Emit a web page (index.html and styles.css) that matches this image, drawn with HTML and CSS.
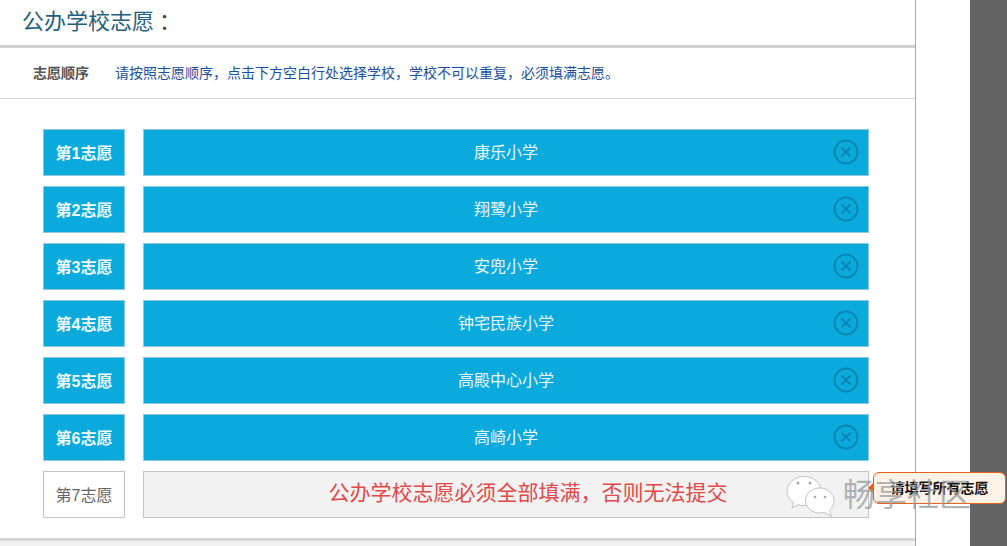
FILE: index.html
```html
<!DOCTYPE html>
<html lang="zh-CN">
<head>
    <meta charset="UTF-8">
    <title>公办学校志愿</title>
    <link rel="stylesheet" href="styles.css">
</head>
<body>
    <div class="page">
        <div class="panel">
            <h2 class="title">公办学校志愿<span class="colon">：</span></h2>
            <div class="intro">
                <strong>志愿顺序</strong>
                <span>请按照志愿顺序，点击下方空白行处选择学校，学校不可以重复，必须填满志愿。</span>
            </div>
            <div class="list">
                <div class="row">
                    <div class="label filled">第1志愿</div>
                    <div class="bar filled">康乐小学
                        <svg class="remove" viewBox="0 0 26 26"><circle cx="13" cy="13" r="11.5"/><path d="M8.500 8.500l9 9M17.500 8.500l-9 9"/></svg>
                    </div>
                </div>
                <div class="row">
                    <div class="label filled">第2志愿</div>
                    <div class="bar filled">翔鹭小学
                        <svg class="remove" viewBox="0 0 26 26"><circle cx="13" cy="13" r="11.5"/><path d="M8.500 8.500l9 9M17.500 8.500l-9 9"/></svg>
                    </div>
                </div>
                <div class="row">
                    <div class="label filled">第3志愿</div>
                    <div class="bar filled">安兜小学
                        <svg class="remove" viewBox="0 0 26 26"><circle cx="13" cy="13" r="11.5"/><path d="M8.500 8.500l9 9M17.500 8.500l-9 9"/></svg>
                    </div>
                </div>
                <div class="row">
                    <div class="label filled">第4志愿</div>
                    <div class="bar filled">钟宅民族小学
                        <svg class="remove" viewBox="0 0 26 26"><circle cx="13" cy="13" r="11.5"/><path d="M8.500 8.500l9 9M17.500 8.500l-9 9"/></svg>
                    </div>
                </div>
                <div class="row">
                    <div class="label filled">第5志愿</div>
                    <div class="bar filled">高殿中心小学
                        <svg class="remove" viewBox="0 0 26 26"><circle cx="13" cy="13" r="11.5"/><path d="M8.500 8.500l9 9M17.500 8.500l-9 9"/></svg>
                    </div>
                </div>
                <div class="row">
                    <div class="label filled">第6志愿</div>
                    <div class="bar filled">高崎小学
                        <svg class="remove" viewBox="0 0 26 26"><circle cx="13" cy="13" r="11.5"/><path d="M8.500 8.500l9 9M17.500 8.500l-9 9"/></svg>
                    </div>
                </div>
                <div class="row">
                    <div class="label">第7志愿</div>
                    <div class="bar empty">公办学校志愿必须全部填满，否则无法提交</div>
                </div>
            </div>
            <div class="foot"></div>
        </div>
        <div class="gutter"></div>
        <div class="band"></div>
    </div>

    <div class="tip">请填写所有志愿</div>
    <div class="watermark">
        <svg class="wechat" viewBox="0 0 50 44">
            <path class="bubble" d="M19 1.500C10 1.500 2 8 2 16c0 4.800 2.600 8.800 6.500 11.500L7 33l6.200-3.200c1.800.5 3.600.7 5.800.7 1 0 1.800-.1 2.700-.2C23.500 20 29 13.500 36 12.800 33.500 6 27 1.500 19 1.500z"/>
            <path class="bubble" d="M34.500 13C27 13 20.500 18.500 20.500 25.500S27 38 34.500 38c1.700 0 3.200-.3 4.700-.7l7.300 4-2-6c2.700-2.400 4.500-5.800 4.500-9.800C49 18.500 42 13 34.500 13z"/>
            <circle class="eye" cx="13" cy="8" r="1.500"/>
            <circle class="eye" cx="25" cy="8" r="1.500"/>
            <circle class="eye" cx="30" cy="22" r="1.300"/>
            <circle class="eye" cx="40" cy="22" r="1.300"/>
        </svg>
        <span>畅享社区</span>
    </div>
</body>
</html>
```

FILE: styles.css
```css
body {
    margin: 0;
    height: 546px;
    overflow: hidden;
    background-color: #fff;
    font-family: "Liberation Sans", "Noto Sans CJK SC", sans-serif;
    position: relative;
}

.page {
    display: flex;
    height: 546px;
}

.panel {
    width: 915px;
    border-right: 1px solid #a8a8a8;
    display: flex;
    flex-direction: column;
}

.gutter {
    width: 54px;
}

.band {
    flex: 1;
    background-color: #636363;
}

.title {
    margin: 0;
    height: 45px;
    padding-left: 22px;
    font-size: 22px;
    font-weight: normal;
    line-height: 44px;
    color: #1f5f7d;
    border-bottom: 3px solid #d0d0d0;
}

.colon {
    margin-left: 5px;
    color: #444;
}

.intro {
    display: flex;
    align-items: center;
    height: 50px;
    padding-left: 33px;
    font-size: 14px;
    line-height: 48px;
    border-bottom: 1px solid #d8d8d8;
}

.intro strong {
    width: 82px;
    color: #555;
}

.intro span {
    color: #1c4f9c;
}

.list {
    flex: 1;
    padding: 30px 46px 0 43px;
    display: flex;
    flex-direction: column;
    gap: 10px;
}

.row {
    display: flex;
    gap: 18px;
    height: 47px;
}

.label {
    width: 82px;
    box-sizing: border-box;
    border: 1px solid #c4c4c4;
    font-size: 16px;
    line-height: 48px;
    text-align: center;
    color: #666;
}

.label.filled {
    background-color: #0aabdc;
    border-color: #8cc8de;
    color: #f2fbfe;
    font-weight: bold;
}

.bar {
    flex: 1;
    box-sizing: border-box;
    position: relative;
    text-align: center;
    font-size: 16px;
    line-height: 46px;
}

.bar.filled {
    background-color: #0aabdc;
    border: 1px solid #8cc8de;
    color: #e8f7fc;
}

.bar.empty {
    background-color: #f2f2f2;
    border: 1px solid #c4c4c4;
    color: #e04a4a;
    font-size: 21px;
    line-height: 41px;
    padding-left: 44px;
}

.remove {
    position: absolute;
    right: 9px;
    top: 9px;
    width: 26px;
    height: 26px;
    fill: none;
    stroke: #0a86b3;
    stroke-width: 2;
}

.foot {
    height: 5px;
    background-color: #f2f2f2;
    border-top: 3px solid #d8d8d8;
}

.watermark {
    position: absolute;
    left: 785px;
    top: 475px;
    display: flex;
    align-items: flex-start;
    gap: 8px;
    color: rgba(150, 155, 160, 0.75);
    font-size: 32px;
    line-height: 40px;
}

.wechat {
    width: 50px;
    height: 44px;
    fill: #fff;
    stroke: #c4c4c4;
    stroke-width: 1;
}

.bubble {
    fill: #fff;
}

.eye {
    fill: #aaa;
    stroke: none;
}

.tip {
    position: absolute;
    left: 873px;
    top: 472px;
    width: 133px;
    height: 32px;
    box-sizing: border-box;
    border: 1px solid #e8601a;
    border-radius: 6px;
    background-color: #fff3e8;
    font-size: 14px;
    font-weight: bold;
    line-height: 30px;
    text-align: center;
    color: #111;
}

.tip::before {
    content: "";
    position: absolute;
    left: -6px;
    top: 9px;
    border-top: 6px solid transparent;
    border-bottom: 6px solid transparent;
    border-right: 6px solid #e8601a;
}
```
